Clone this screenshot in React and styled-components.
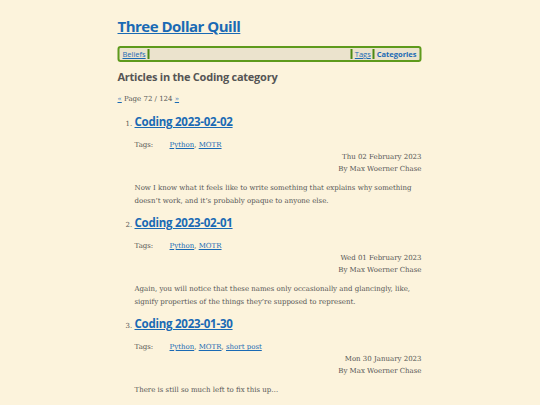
import React from 'react';
import styled, { createGlobalStyle } from 'styled-components';

const GlobalStyle = createGlobalStyle`
    html, body {
        margin: 0;
        padding: 0;
        background: #fcf3dc;
    }
    body {
        font-family: "DejaVu Serif", serif;
        color: #555;
    }
`;

const Page = styled.div`
    width: 304px;
    margin: 0 auto;
    padding: 15px 0 20px;
    transform: translateX(-0.5px);
`;

const SiteTitle = styled.h1`
    margin: 0 0 9px;
    font-family: "Open Sans", sans-serif;
    font-size: 15px;
    letter-spacing: -0.5px;
    line-height: 22px;
    font-weight: 700;
    a {
        color: #1a6ab4;
    }
`;

const Nav = styled.nav`
    display: flex;
    align-items: center;
    height: 12px;
    border: 2px solid #5e9a1c;
    border-radius: 3px;
    background: #ebe3cd;
    padding: 0 2px;
    font-family: "Open Sans", sans-serif;
    font-size: 7.5px;
`;

const NavLink = styled.a`
    color: #1a6ab4;
    font-weight: ${p => (p.$bold ? 700 : 400)};
    text-decoration: ${p => (p.$bold ? 'none' : 'underline')};
    padding: 0 1px;
`;

const Sep = styled.span`
    width: 2px;
    height: 10px;
    background: #4d8a12;
    margin: 0 1px;
`;

const Spacer = styled.span`
    flex: 1;
`;

const Heading = styled.h2`
    margin: 7px 0 0;
    font-family: "Open Sans", sans-serif;
    font-size: 11px;
    letter-spacing: -0.25px;
    line-height: 16px;
    font-weight: 700;
    color: #555;
`;

const Pager = styled.p`
    margin: 9px 0 0;
    font-size: 7px;
    line-height: 10px;
    a {
        color: #1a6ab4;
    }
`;

const List = styled.ol`
    margin: 7px 0 0;
    padding-left: 17px;
    font-size: 7px;
`;

const Item = styled.li`
    margin-bottom: 4px;
`;

const Title = styled.h3`
    display: inline-block;
    margin: 0;
    font-family: "Open Sans", sans-serif;
    font-size: 11.5px;
    letter-spacing: -0.25px;
    line-height: 22px;
    font-weight: 700;
    a {
        color: #1a6ab4;
    }
`;

const Tags = styled.div`
    display: flex;
    margin-top: 6px;
    font-size: 7px;
    line-height: 12px;
    a {
        color: #1a6ab4;
    }
`;

const TagLabel = styled.span`
    width: 35px;
`;

const Meta = styled.div`
    text-align: right;
    font-size: 7px;
    line-height: 12px;
`;

const Summary = styled.p`
    margin: 7px 0 0;
    font-size: 7px;
    line-height: 13px;
`;

const articles = [
    {
        title: 'Coding 2023-02-02',
        tags: ['Python', 'MOTR'],
        date: 'Thu 02 February 2023',
        summary: 'Now I know what it feels like to write something that explains why something doesn\u2019t work, and it\u2019s probably opaque to anyone else.',
    },
    {
        title: 'Coding 2023-02-01',
        tags: ['Python', 'MOTR'],
        date: 'Wed 01 February 2023',
        summary: 'Again, you will notice that these names only occasionally and glancingly, like, signify properties of the things they\u2019re supposed to represent.',
    },
    {
        title: 'Coding 2023-01-30',
        tags: ['Python', 'MOTR', 'short post'],
        date: 'Mon 30 January 2023',
        summary: 'There is still so much left to fix this up\u2026',
    },
];

export default function App() {
    return (
        <>
            <GlobalStyle />
            <Page>
                <SiteTitle><a href="#home">Three Dollar Quill</a></SiteTitle>
                <Nav>
                    <NavLink href="#beliefs">Beliefs</NavLink>
                    <Sep />
                    <Spacer />
                    <Sep />
                    <NavLink href="#tags">Tags</NavLink>
                    <Sep />
                    <NavLink href="#categories" $bold>Categories</NavLink>
                </Nav>
                <Heading>Articles in the Coding category</Heading>
                <Pager><a href="#prev">«</a> Page 72 / 124 <a href="#next">»</a></Pager>
                <List>
                    {articles.map(a => (
                        <Item key={a.title}>
                            <Title><a href="#post">{a.title}</a></Title>
                            <Tags>
                                <TagLabel>Tags:</TagLabel>
                                <span>
                                    {a.tags.map((t, i) => (
                                        <React.Fragment key={t}>
                                            {i > 0 && ', '}
                                            <a href="#tag">{t}</a>
                                        </React.Fragment>
                                    ))}
                                </span>
                            </Tags>
                            <Meta>
                                {a.date}
                                <br />
                                By Max Woerner Chase
                            </Meta>
                            <Summary>{a.summary}</Summary>
                        </Item>
                    ))}
                </List>
            </Page>
        </>
    );
}
